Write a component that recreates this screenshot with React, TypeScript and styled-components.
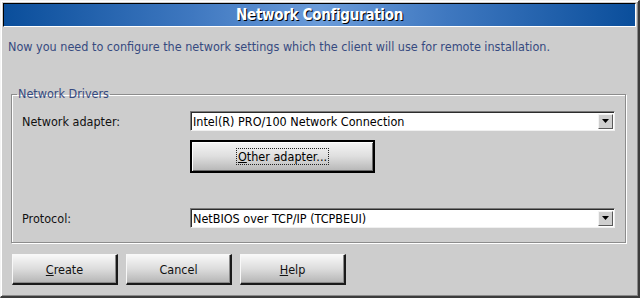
import { FC } from "react"
import styled, { createGlobalStyle } from "styled-components"

const GlobalStyle = createGlobalStyle`
  html, body {
    margin: 0;
    padding: 0;
    background: #cdcdcd;
  }
  body {
    font-family: "DejaVu Sans Condensed", "DejaVu Sans", sans-serif;
    font-size: 12.5px;
  }
`

const Window = styled.div`
  box-sizing: border-box;
  width: 640px;
  height: 298px;
  background: #cdcdcd;
  border-style: solid;
  border-width: 1px 2px 2px 1px;
  border-color: #f4f4f4 #3c3c3c #3c3c3c #f4f4f4;
  box-shadow: inset 1px 1px 0 #ffffff, inset -1px -1px 0 #8a8a8a;
  padding: 2px 2px 0 2px;
  display: flex;
  flex-direction: column;
`

const TitleBar = styled.div`
  height: 22px;
  border-style: solid;
  border-width: 1px;
  border-color: #000 #fff #fff #000;
  background: linear-gradient(90deg, #0a4e9b 0%, #3f78c0 30%, #6b9cda 50%, #3f78c0 70%, #0a4e9b 100%);
  display: flex;
  align-items: center;
  justify-content: center;
  color: #fff;
  font-size: 15px;
  font-weight: bold;
  letter-spacing: -0.3px;
  text-shadow: 1px 1px 0 #000;
`

const Intro = styled.p`
  margin: 12px 0 0 5px;
  color: #364a80;
  line-height: 16px;
`

const Group = styled.fieldset`
  margin: 32px 10px 0 8px;
  padding: 10px 0 0 10px;
  height: 156px;
  box-sizing: border-box;
  border: 1px solid #8c8c8c;
  box-shadow: 1px 1px 0 #fff, inset 1px 1px 0 #fff;
  display: flex;
  flex-direction: column;
`

const Legend = styled.legend`
  color: #364a80;
  padding: 0 1px;
  margin-left: -5px;
  line-height: 14px;
`

const Row = styled.div<{ $top: number }>`
  display: flex;
  align-items: center;
  margin-top: ${p => p.$top}px;
`

const Label = styled.span`
  width: 168px;
  color: #111;
`

const Select = styled.div`
  box-sizing: border-box;
  width: 425px;
  height: 20px;
  background: #fff;
  border-style: solid;
  border-width: 1px;
  border-color: #7a7a7a #f0f0f0 #f0f0f0 #7a7a7a;
  box-shadow: inset 1px 1px 0 #2c2c2c;
  display: flex;
  align-items: center;
  padding-left: 2px;
  color: #000;
`

const SelectText = styled.span`
  flex: 1;
  white-space: nowrap;
`

const Arrow = styled.div`
  width: 15px;
  height: 15px;
  margin-right: 1px;
  box-sizing: border-box;
  background: #cfcfcf;
  border-style: solid;
  border-width: 1px;
  border-color: #f4f4f4 #5a5a5a #5a5a5a #f4f4f4;
  display: flex;
  align-items: center;
  justify-content: center;
`

const DefaultButton = styled.button`
  box-sizing: border-box;
  margin-left: 168px;
  width: 185px;
  height: 33px;
  padding: 0;
  border: 2px solid #000;
  background: linear-gradient(180deg, #f6f6f6 0%, #dedede 50%, #b6b6b6 100%);
  box-shadow: inset 1px 1px 0 #fff, inset -1px -1px 0 #6a6a6a;
  font: inherit;
  color: #000;
  display: flex;
  align-items: center;
  justify-content: center;
`

const Focus = styled.span`
  outline: 1px dotted #222;
  padding: 0 1px;
  line-height: 15px;
`

const Footer = styled.div`
  display: flex;
  gap: 8px;
  margin: 11px 0 0 9px;
`

const Button = styled.button`
  box-sizing: border-box;
  width: 106px;
  height: 31px;
  padding: 0;
  border-style: solid;
  border-width: 1px 2px 2px 1px;
  border-color: #f8f8f8 #1a1a1a #1a1a1a #f8f8f8;
  background: linear-gradient(180deg, #f8f8f8 0%, #dcdcdc 50%, #b4b4b4 100%);
  box-shadow: inset -1px -1px 0 #8a8a8a;
  font: inherit;
  color: #111;
`

const DownArrow: FC = () => (
  <svg width="7" height="4" viewBox="0 0 7 4">
    <path d="M0 0h7L3.5 4z" fill="#000" />
  </svg>
)

const App: FC = () => {
  return (
    <>
      <GlobalStyle />
      <Window>
        <TitleBar>Network Configuration</TitleBar>
        <Intro>Now you need to configure the network settings which the client will use for remote installation.</Intro>
        <Group>
          <Legend>Network Drivers</Legend>
          <Row $top={0}>
            <Label>Network adapter:</Label>
            <Select>
              <SelectText>Intel(R) PRO/100 Network Connection</SelectText>
              <Arrow><DownArrow /></Arrow>
            </Select>
          </Row>
          <Row $top={9}>
            <DefaultButton>
              <Focus><u>O</u>ther adapter...</Focus>
            </DefaultButton>
          </Row>
          <Row $top={35}>
            <Label>Protocol:</Label>
            <Select>
              <SelectText>NetBIOS over TCP/IP (TCPBEUI)</SelectText>
              <Arrow><DownArrow /></Arrow>
            </Select>
          </Row>
        </Group>
        <Footer>
          <Button><u>C</u>reate</Button>
          <Button>Cancel</Button>
          <Button><u>H</u>elp</Button>
        </Footer>
      </Window>
    </>
  )
}

export default App
